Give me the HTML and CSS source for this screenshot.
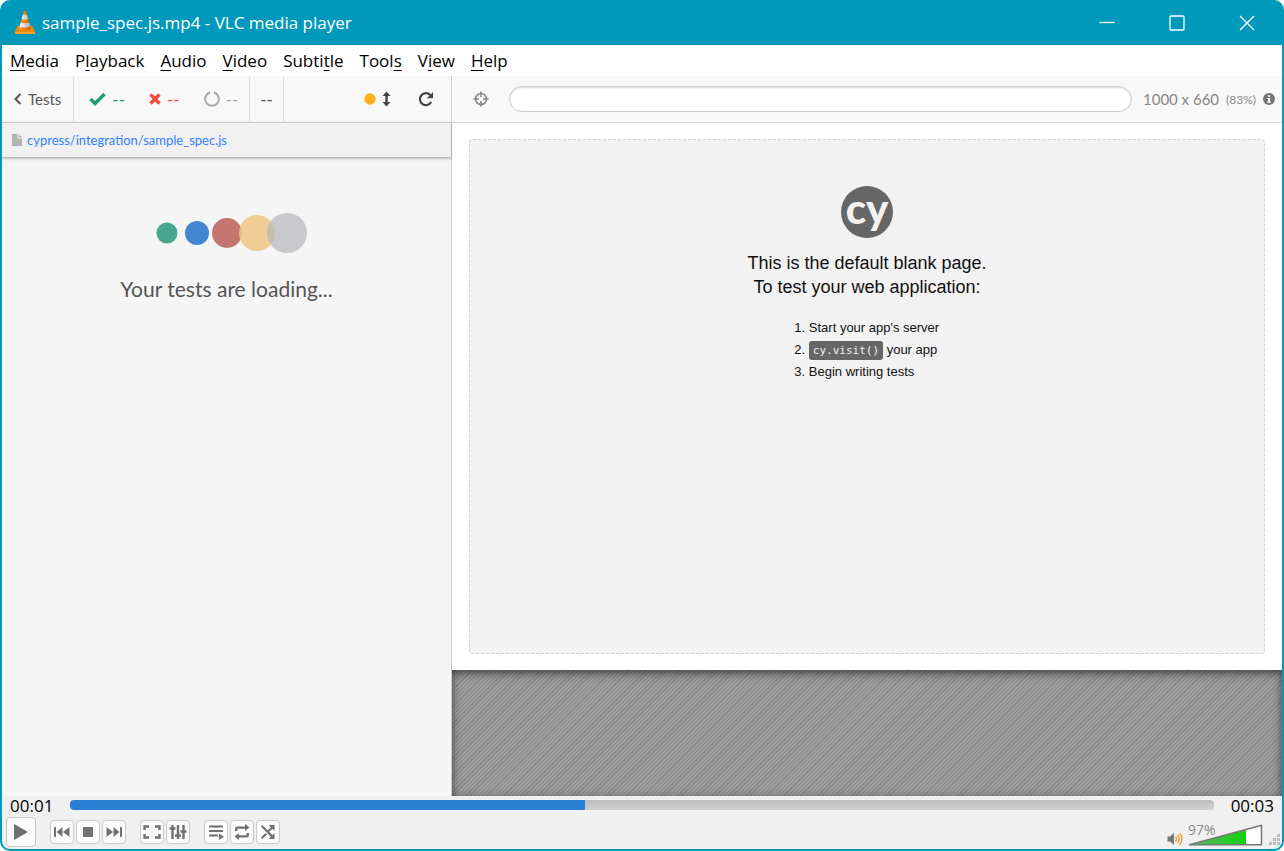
FILE: index.html
```html
<!DOCTYPE html>
<html lang="en">
<head>
    <meta charset="UTF-8">
    <meta name="viewport" content="width=device-width, initial-scale=1.0">
    <title>sample_spec.js.mp4 - VLC media player</title>
    <link rel="stylesheet" href="styles.css">
</head>
<body>
<div class="window">

    <!-- Title bar -->
    <header class="titlebar">
        <svg class="cone" width="22" height="24" viewBox="0 0 22 24">
            <defs>
                <linearGradient id="orange" x1="0" x2="1">
                    <stop offset="0" stop-color="#ffa530"/>
                    <stop offset="0.5" stop-color="#f57d00"/>
                    <stop offset="1" stop-color="#c85200"/>
                </linearGradient>
                <linearGradient id="silver" x1="0" x2="1">
                    <stop offset="0" stop-color="#ffffff"/>
                    <stop offset="1" stop-color="#a9a9a9"/>
                </linearGradient>
            </defs>
            <path d="M3.5 16h15l2.5 6H1z" fill="#f08705"/>
            <path d="M1 22h20v2H1z" fill="#ffa22b"/>
            <path d="M10 1q1-1 2 0l5 18q-6 3-12 0z" fill="url(#orange)"/>
            <path d="M8.900 4.700h4.200l1.300 4.300q-3.400 1.400-6.800 0z" fill="url(#silver)"/>
            <path d="M6.700 12.500q4.300 1.600 8.600 0l1.200 4q-5.500 2-11 0z" fill="url(#silver)"/>
        </svg>
        <h1 class="title">sample_spec.js.mp4 - VLC media player</h1>
        <div class="window-buttons">
            <button type="button" aria-label="Minimize">
                <svg width="16" height="16" viewBox="0 0 16 16"><path d="M0.500 7.500h15"/></svg>
            </button>
            <button type="button" aria-label="Maximize">
                <svg width="16" height="16" viewBox="0 0 16 16"><rect x="1" y="1" width="14" height="14" rx="1"/></svg>
            </button>
            <button type="button" aria-label="Close">
                <svg width="16" height="16" viewBox="0 0 16 16"><path d="M1 1l14 14M15 1L1 15"/></svg>
            </button>
        </div>
    </header>

    <!-- Menu -->
    <nav class="menu">
        <button type="button"><u>M</u>edia</button>
        <button type="button">P<u>l</u>ayback</button>
        <button type="button"><u>A</u>udio</button>
        <button type="button"><u>V</u>ideo</button>
        <button type="button">Subti<u>t</u>le</button>
        <button type="button">Tool<u>s</u></button>
        <button type="button">V<u>i</u>ew</button>
        <button type="button"><u>H</u>elp</button>
    </nav>

    <!-- Video frame: the Cypress runner -->
    <main class="video">
        <section class="reporter">
            <div class="toolbar">
                <a class="back" href="#">
                    <svg width="8" height="12" viewBox="0 0 8 12"><path d="M6.500 1l-5 5 5 5" fill="none" stroke="#555" stroke-width="2"/></svg>
                    Tests
                </a>
                <ul class="stats">
                    <li class="passed">
                        <svg width="17" height="14" viewBox="0 0 17 14"><path d="M1.500 7l4.500 4.500L15.500 2" fill="none" stroke="currentColor" stroke-width="3.400"/></svg>
                        --
                    </li>
                    <li class="failed">
                        <svg width="12" height="12" viewBox="0 0 12 12"><path d="M1.500 1.500l9 9M10.500 1.500l-9 9" fill="none" stroke="currentColor" stroke-width="3.400"/></svg>
                        --
                    </li>
                    <li class="pending">
                        <svg width="16" height="16" viewBox="0 0 16 16"><path d="M9.800 1.500a6.800 6.800 0 1 1-3.600 0" fill="none" stroke="currentColor" stroke-width="2"/></svg>
                        --
                    </li>
                </ul>
                <span class="duration">--</span>
                <div class="actions">
                    <button type="button" class="scroll" aria-label="Auto-scrolling">
                        <svg width="28" height="16" viewBox="0 0 28 16">
                            <circle cx="6" cy="8" r="5.700" fill="#ffb11b"/>
                            <path d="M22.500 0.500l4 4.500h-2.800v6h2.800l-4 4.500-4-4.500h2.800V5h-2.800z" fill="#444"/>
                        </svg>
                    </button>
                    <button type="button" class="reload" aria-label="Run all tests">
                        <svg width="16" height="16" viewBox="0 0 16 16">
                            <path d="M12.300 4A6 6 0 1 0 13.200 11" fill="none" stroke="#444" stroke-width="2.200"/>
                            <path d="M15 1v6.200H8.800z" fill="#444"/>
                        </svg>
                    </button>
                </div>
            </div>
            <div class="spec">
                <svg width="10" height="12" viewBox="0 0 10 12"><path d="M0 0h5.500v4.500H10V12H0z" fill="#b4b4b4"/><path d="M6.500 0L10 3.500H6.500z" fill="#b4b4b4"/></svg>
                <a href="#">cypress/integration/sample_spec.js</a>
            </div>
            <div class="loading">
                <svg width="152" height="42" viewBox="0 0 152 42">
                    <circle cx="11" cy="21" r="10.500" fill="#48a68c"/>
                    <circle cx="41" cy="21" r="12" fill="#4487d1"/>
                    <circle cx="71" cy="21" r="15" fill="#c67670"/>
                    <circle cx="101" cy="21" r="18" fill="#edc583" fill-opacity="0.850"/>
                    <circle cx="131" cy="21" r="20" fill="#bab8bd" fill-opacity="0.750"/>
                </svg>
                <p>Your tests are loading...</p>
            </div>
        </section>

        <section class="runner">
            <div class="toolbar">
                <button type="button" class="selector" aria-label="Open selector playground">
                    <svg width="16" height="16" viewBox="0 0 16 16" fill="none" stroke="#888">
                        <circle cx="8" cy="8" r="5.500" stroke-width="1.600"/>
                        <path d="M8 0.500v5.500M8 10v5.500M0.500 8H6M10 8h5.500" stroke-width="1.600"/>
                    </svg>
                </button>
                <input class="url" type="text" aria-label="URL" readonly>
                <div class="viewport">
                    <span>1000 x 660</span>
                    <small>(83%)</small>
                    <svg width="12" height="12" viewBox="0 0 12 12"><circle cx="6" cy="6" r="6" fill="#777"/><path d="M5 2.200h2v1.600H5zM4.300 4.900H7v3.600h.800v1.200H4.200V8.500H5V6h-.700z" fill="#fff"/></svg>
                </div>
            </div>
            <div class="stage">
                <div class="blank">
                    <div class="logo">cy</div>
                    <p>This is the default blank page.<br>To test your web application:</p>
                    <ol>
                        <li>Start your app's server</li>
                        <li><code>cy.visit()</code> your app</li>
                        <li>Begin writing tests</li>
                    </ol>
                </div>
            </div>
            <div class="hatch"></div>
        </section>
    </main>

    <!-- Player controls -->
    <footer class="player">
        <div class="timeline">
            <span>00:01</span>
            <input class="seek" type="range" min="0" max="100" value="45" aria-label="Position" style="--played: 45%">
            <span>00:03</span>
        </div>
        <div class="controls">
            <button type="button" class="play" aria-label="Play">
                <svg width="16" height="18" viewBox="0 0 16 18"><path d="M1 1l14 8-14 8z"/></svg>
            </button>
            <div class="group">
                <button type="button" aria-label="Previous">
                    <svg width="16" height="16" viewBox="0 0 16 16"><path d="M0 3h2v10H0zM8.500 3v10L2.500 8zM15.500 3v10L9 8z"/></svg>
                </button>
                <button type="button" aria-label="Stop">
                    <svg width="16" height="16" viewBox="0 0 16 16"><path d="M3 3h10v10H3z"/></svg>
                </button>
                <button type="button" aria-label="Next">
                    <svg width="16" height="16" viewBox="0 0 16 16"><path d="M14 3h2v10h-2zM7.500 3v10l6-5zM.500 3v10L7 8z"/></svg>
                </button>
            </div>
            <div class="group">
                <button type="button" aria-label="Fullscreen">
                    <svg class="line" width="18" height="16" viewBox="0 0 18 16"><path d="M1.500 6V2.500H6M12 2.500h4.500V6M16.500 10v3.500H12M6 13.500H1.500V10"/></svg>
                </button>
                <button type="button" aria-label="Extended settings">
                    <svg class="line" width="18" height="16" viewBox="0 0 18 16"><path d="M3.500 1v14M9 1v14M14.500 1v14M0.500 4.500h6M6 11.500h6M11.500 7.500h6"/></svg>
                </button>
            </div>
            <div class="group">
                <button type="button" aria-label="Playlist">
                    <svg width="16" height="16" viewBox="0 0 16 16"><path d="M1 1.500h14v2H1zM1 6h14v2H1zM1 10.500h9v2H1zM11 9.500l5 3.250-5 3.250z"/></svg>
                </button>
                <button type="button" aria-label="Loop">
                    <svg width="16" height="16" viewBox="0 0 16 16"><path d="M1 7V5q0-2.500 2.500-2.500H11V0l4.500 3.500L11 7V4.700H3.500V7zM15 9v2q0 2.500-2.500 2.500H5V16L.500 12.500 5 9v2.300h7.500V9z"/></svg>
                </button>
                <button type="button" aria-label="Random">
                    <svg width="16" height="16" viewBox="0 0 16 16"><path d="M1 2.500l1.500-1.500 10 10L14.500 9v6H8.500l2.300-2.300zM8.500 1h6v6l-2.200-2.200-3 3-1.500-1.500 3-3zM5.500 9L7 10.500 2.500 15 1 13.500z"/></svg>
                </button>
            </div>
            <div class="sound">
                <svg class="speaker" width="16" height="14" viewBox="0 0 16 14">
                    <path d="M0.500 4.500H3L7 1v12L3 9.500H0.500z" fill="#777"/>
                    <path d="M8.500 4.500q2 2.500 0 5M10.500 2.800q3.600 4.200 0 8.400M12.500 1q5 6 0 12" fill="none" stroke="#f59a2c" stroke-width="1.300"/>
                </svg>
                <div class="volume">
                    <svg width="76" height="22" viewBox="0 0 76 22">
                        <defs>
                            <linearGradient id="level" x1="0" x2="1">
                                <stop offset="0" stop-color="#5db95d"/>
                                <stop offset="1" stop-color="#12d012"/>
                            </linearGradient>
                        </defs>
                        <path d="M1 21L74 1v20z" fill="#fff"/>
                        <path d="M1 21L58 5.400V21z" fill="url(#level)"/>
                        <path d="M1.500 20.800L73.500 1.300v19.500z" fill="none" stroke="#777" stroke-width="1.500" stroke-linejoin="round"/>
                    </svg>
                    <label for="volume">97%</label>
                    <input id="volume" type="range" min="0" max="125" value="97">
                </div>
                <svg class="grip" width="12" height="12" viewBox="0 0 12 12"><path d="M8 0h3v3H8zM4 4h3v3H4zM8 4h3v3H8zM0 8h3v3H0zM4 8h3v3H4zM8 8h3v3H8z" fill="#bbb"/></svg>
            </div>
        </div>
    </footer>
</div>
</body>
</html>
```
FILE: styles.css
```css
* {
    box-sizing: border-box;
}

body {
    margin: 0;
    background: #fff;
    font-family: "Open Sans", "Noto Sans", sans-serif;
}

button {
    border: 0;
    padding: 0;
    background: none;
    font: inherit;
    color: inherit;
}

svg {
    display: block;
    flex: none;
}

.window {
    display: flex;
    flex-direction: column;
    min-height: 100vh;
    border: 2px solid #0099bc;
    border-top: 0;
    border-radius: 10px;
    background: #0099bc;
    overflow: hidden;
}

/* Title bar */
.titlebar {
    display: flex;
    align-items: center;
    height: 45px;
    padding: 0 0 0 12px;
    color: #fff;
}

.cone {
    margin-bottom: 2px;
}

.title {
    margin: 0 auto 0 6px;
    font-size: 17px;
    font-weight: 400;
}

.window-buttons {
    display: flex;
}

.window-buttons button {
    display: flex;
    align-items: center;
    justify-content: center;
    width: 70px;
    height: 45px;
}

.window-buttons svg {
    fill: none;
    stroke: #fff;
    stroke-width: 1.3;
}

/* Menu */
.menu {
    display: flex;
    gap: 16px;
    height: 31px;
    padding: 0 8px;
    background: #fff;
    color: #000;
    font-size: 17px;
    line-height: 32px;
}

.menu u {
    text-underline-offset: 3px;
}

/* Video frame */
.video {
    display: grid;
    grid-template-columns: 450px 1fr;
    flex: 1;
    background: #f5f5f5;
    font-family: Lato, sans-serif;
}

.toolbar {
    display: flex;
    align-items: center;
    height: 47px;
    border-bottom: 1px solid #d8d8d8;
    background: #f8f8f8;
    font-size: 15px;
    color: #555;
}

.reporter {
    display: flex;
    flex-direction: column;
    border-right: 1px solid #ccc;
}

.back,
.stats,
.duration {
    display: flex;
    align-items: center;
    height: 100%;
    border-right: 1px solid #ddd;
}

.back {
    gap: 6px;
    padding: 0 12px;
    color: #555;
    text-decoration: none;
}

.stats {
    gap: 24px;
    margin: 0;
    padding: 0 11px 0 15px;
    font-size: 17px;
    list-style: none;
}

.stats li {
    display: flex;
    align-items: center;
    gap: 6px;
}

.passed {
    color: #1b9e77;
}

.failed {
    color: #f14c3e;
}

.pending {
    color: #aaa;
}

.duration {
    padding: 0 10px;
    font-size: 17px;
}

.actions {
    display: flex;
    gap: 26px;
    margin-left: auto;
    padding-right: 17px;
}

.spec {
    display: flex;
    align-items: center;
    gap: 5px;
    height: 34px;
    padding: 0 10px;
    background: #f1f1f1;
    box-shadow: 0 1px 3px rgba(0, 0, 0, 0.4);
    font-size: 13px;
}

.spec a {
    color: #3380ff;
    text-decoration: none;
}

.loading {
    display: flex;
    flex-direction: column;
    align-items: center;
    gap: 22px;
    padding: 55px 0 0 10px;
    color: #555;
    font-size: 21px;
}

.loading p {
    margin: 0 10px 0 0;
}

/* Runner */
.runner {
    display: flex;
    flex-direction: column;
}

.selector {
    margin: 0 20px 0 21px;
}

.url {
    flex: 1;
    min-width: 0;
    height: 26px;
    border: 1px solid #ccc;
    border-radius: 13px;
    padding: 0 12px;
    background: #fff;
    box-shadow: inset 0 1px 2px rgba(0, 0, 0, 0.15);
}

.viewport {
    display: flex;
    align-items: center;
    gap: 7px;
    padding: 0 7px 0 11px;
    color: #888;
}

.viewport small {
    font-size: 12px;
}

.stage {
    display: flex;
    padding: 16px 17px;
    aspect-ratio: 830 / 547;
    background: #fff;
}

.blank {
    display: flex;
    flex-direction: column;
    align-items: center;
    flex: 1;
    padding-top: 46px;
    border: 1px dashed #d4d4d4;
    border-radius: 4px;
    background: #f2f2f2;
    color: #111;
    font-family: "Liberation Sans", Arial, sans-serif;
}

.logo {
    width: 52px;
    height: 52px;
    border-radius: 50%;
    background: #666;
    color: #f2f2f2;
    font-family: Lato, sans-serif;
    font-size: 42px;
    font-weight: 900;
    line-height: 44px;
    text-align: center;
}

.blank p {
    margin: 13px 0 18px;
    font-size: 18px;
    line-height: 24px;
    text-align: center;
}

.blank ol {
    margin: 0;
    padding: 0 0 0 14px;
    font-size: 13px;
    line-height: 22px;
}

.blank code {
    padding: 3px 4px;
    border-radius: 3px;
    background: #666;
    color: #f2f2f2;
    font-family: "DejaVu Sans Mono", monospace;
    font-size: 11px;
    line-height: 14px;
}

.hatch {
    flex: 1;
    background: repeating-linear-gradient(135deg, #9c9c9c 0 2px, #8a8a8a 2px 3px);
    box-shadow: inset 0 3px 10px rgba(0, 0, 0, 0.6);
}

/* Player controls */
.player {
    padding: 0 0 2px 4px;
    background: #f0f0f0;
}

.timeline {
    display: flex;
    align-items: center;
    gap: 17px;
    height: 20px;
    padding: 0 8px 0 4px;
    color: #000;
    font-size: 17px;
    line-height: 20px;
}

.seek {
    flex: 1;
    appearance: none;
    height: 10px;
    margin: 0 0 3px;
    border-radius: 4px;
    background: linear-gradient(to right, #2a7fd4 var(--played), transparent var(--played)), linear-gradient(#bcbcbc, #d0d0d0);
}

.seek::-webkit-slider-thumb {
    appearance: none;
    width: 0;
    height: 10px;
}

.controls {
    display: flex;
    align-items: center;
    gap: 14px;
    height: 31px;
}

.group {
    display: flex;
    gap: 2px;
}

.controls button {
    display: flex;
    align-items: center;
    justify-content: center;
    width: 24px;
    height: 24px;
    border: 1px solid #c8c8c8;
    border-radius: 4px;
    background: #fcfcfc;
    fill: #707070;
}

.controls .play {
    width: 30px;
    height: 30px;
}

.controls .line {
    fill: none;
    stroke: #707070;
    stroke-width: 2.4;
}

.sound {
    display: flex;
    align-items: flex-end;
    align-self: flex-end;
    gap: 5px;
    margin-left: auto;
    padding: 0 1px 1px 0;
}

.volume {
    position: relative;
}

.volume label {
    position: absolute;
    top: -4px;
    left: 0;
    color: #888;
    font-size: 14px;
    line-height: 20px;
}

.volume input {
    position: absolute;
    inset: 0;
    width: 100%;
    margin: 0;
    opacity: 0;
}
```
